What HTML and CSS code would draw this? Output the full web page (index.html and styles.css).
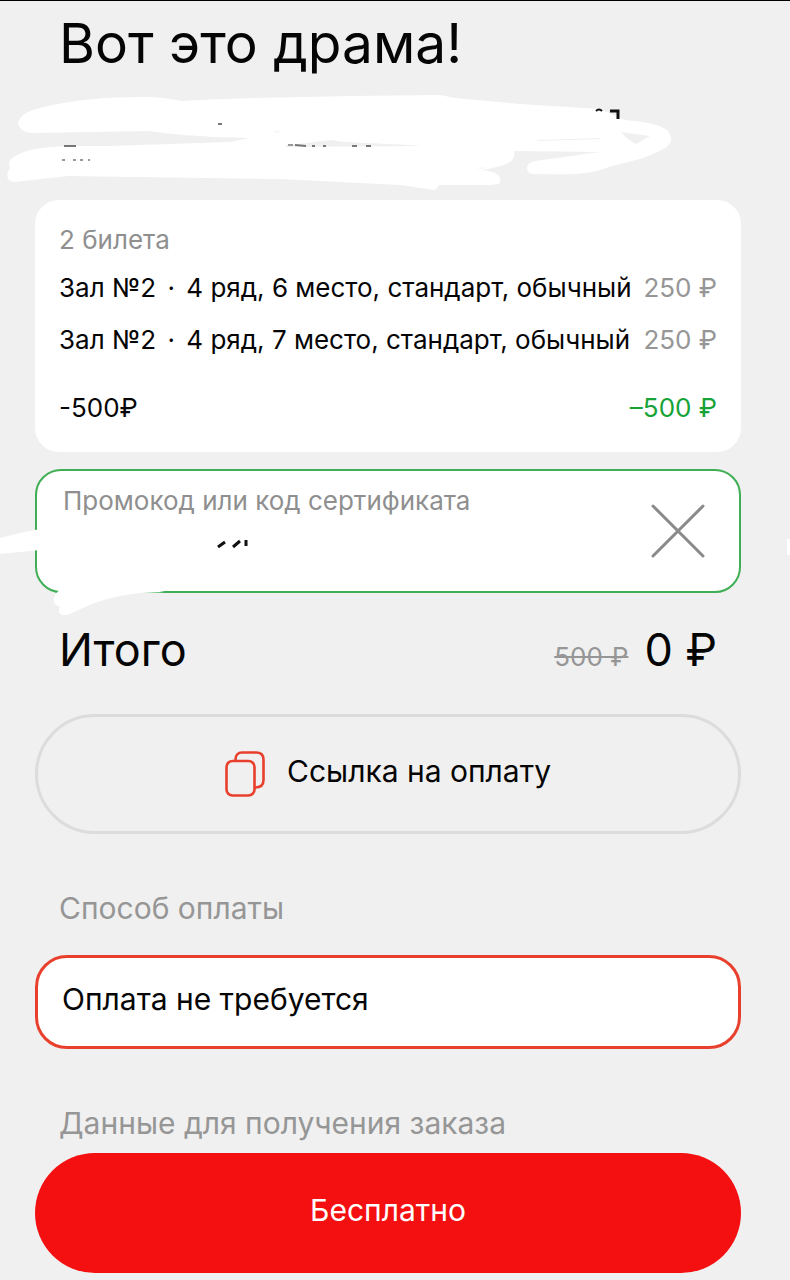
FILE: index.html
```html
<!DOCTYPE html>
<html lang="ru">

<head>
    <meta charset="UTF-8">
    <meta name="viewport" content="width=device-width, initial-scale=1.0">
    <title>Вот это драма!</title>
    <link rel="stylesheet" href="styles.css">
</head>

<body>
    <main class="order">
        <h1 class="order-title">Вот это драма!</h1>

        <!-- Закрашенные данные сеанса -->
        <svg class="session-cover" viewBox="0 0 790 100" preserveAspectRatio="xMinYMin" aria-hidden="true">
            <path fill="#fff" d="M18 32 C20 25 26 20 40 17 C70 9 105 6 145 6 C160 6 170 8 182 10 C230 7 300 6 350 5 L440 4 L455 7 L520 13 L600 18 L625 29 C645 31 660 33 668 40 C675 50 670 56 655 62 C640 70 615 73 600 79 C580 85 555 83 532 83 C525 81 525 72 535 70 L600 61 L514 60 C517 72 502 76 482 79 C497 80 503 86 499 93 L490 94 L439 94 L435 99 L400 94 L280 88 L136 86 L68 85 L14 91 C6 91 6 82 10 77 C6 69 14 64 30 59 C50 54 85 55 110 55 L230 51 L250 47 C210 46 185 45 150 40 L32 42 C24 42 20 38 18 32 Z" />
            <path fill="#f0f0f0" d="M621 41 L650 45 L636 53 C630 50 626 47 621 41 Z M286 54 C310 52 320 50 332 49 C345 52 380 52 424 55 L286 56 Z M536 49 L600 47 L600 48 L538 50 Z" />
            <path fill="#f7f7f7" d="M273 40 L280 39 L278 43 Z M474 77 L486 76 L483 78 Z" />
            <path fill="none" stroke="#111" stroke-width="3" d="M610 20 H618 V28" />
            <path fill="none" stroke="#111" stroke-width="2" d="M596 20 C598 18 600 18 602 20" />
            <path fill="none" stroke="#777" stroke-width="2" d="M64 55 H76 M295 54 L306 55 M312 55 H315 M323 55 H326 M352 55 H357 M366 55 H371 M218 33 H222" />
            <path fill="none" stroke="#999" stroke-width="2" d="M62 69 H65 M73 69 H76 M80 69 H83 M88 69 H90 M288 54 H293" />
        </svg>

        <!-- Билеты -->
        <section class="tickets">
            <h2 class="tickets-title">2 билета</h2>
            <ul class="tickets-list">
                <li class="ticket-row">
                    <span>Зал №2 <span class="dot">·</span> 4 ряд, 6 место, стандарт, обычный</span>
                    <span class="ticket-price">250 ₽</span>
                </li>
                <li class="ticket-row">
                    <span>Зал №2 <span class="dot">·</span> 4 ряд, 7 место, стандарт, обычный</span>
                    <span class="ticket-price">250 ₽</span>
                </li>
            </ul>
            <div class="ticket-row">
                <span>-500₽</span>
                <span class="discount">–500 ₽</span>
            </div>
        </section>

        <!-- Промокод -->
        <div class="promo">
            <div class="promo-field">
                <label for="promo" class="promo-label">Промокод или код сертификата</label>
                <input type="text" id="promo" name="promo" class="promo-input">
            </div>
            <button type="button" class="promo-clear" aria-label="Очистить">
                <svg width="54" height="54" viewBox="0 0 54 54" aria-hidden="true">
                    <path d="M2 2 L52 52 M52 2 L2 52" fill="none" stroke="#8a8a8a" stroke-width="3" stroke-linecap="round" />
                </svg>
            </button>
            <svg class="promo-cover" viewBox="0 0 300 160" aria-hidden="true">
                <path fill="#fff" d="M0 69 L20 64 L40 60 V81 L20 83 L0 85 Z M60 120 L148 120 L165 123 L142 124 C125 125 105 130 92 135 L67 146 C60 147 57 143 60 138 C54 136 52 131 55 126 Z" />
                <path fill="none" stroke="#111" stroke-width="3" d="M218 78 L225 73 M233 78 L240 72 M246 71 V77" />
            </svg>
            <span class="edge-mark"></span>
        </div>

        <!-- Итого -->
        <div class="total">
            <span class="total-title">Итого</span>
            <s class="total-old">500 ₽</s>
            <span class="total-price">0 ₽</span>
        </div>

        <button type="button" class="link-btn">
            <svg width="40" height="46" viewBox="0 0 40 46" aria-hidden="true">
                <g fill="none" stroke="#e8402c" stroke-width="2.6">
                    <rect x="1.5" y="10" width="28" height="34.5" rx="6" />
                    <path d="M10.5 10 V8.5 C10.5 4 13 1.5 17 1.5 H31 C36 1.5 38.5 4 38.5 8.5 V29 C38.5 34 36 36.5 30 36.5" />
                </g>
            </svg>
            <span class="btn-text">Ссылка на оплату</span>
        </button>

        <!-- Оплата -->
        <h2 class="section-title">Способ оплаты</h2>
        <button type="button" class="pay-method">Оплата не требуется</button>

        <h2 class="section-title">Данные для получения заказа</h2>
        <button type="submit" class="submit-btn">Бесплатно</button>
    </main>
</body>

</html>
```
FILE: styles.css
```css
* {
    box-sizing: border-box;
}

body {
    margin: 0;
    font-family: Inter, "Liberation Sans", sans-serif;
    font-size: 26px;
    line-height: 36px;
    color: #050505;
    background-color: #f0f0f0;
    border-top: 1px solid #000;
    overflow-x: hidden;
}

button,
input {
    font-family: inherit;
    color: inherit;
}

button {
    cursor: pointer;
}

h1,
h2,
ul {
    margin: 0;
    padding: 0;
    font-weight: 400;
}

.order {
    padding: 10px 49px 7px 35px;
}

/* Заголовок */
.order-title {
    padding-left: 24px;
    font-size: 55px;
    line-height: 64px;
}

.session-cover {
    display: block;
    width: calc(100% + 84px);
    height: 100px;
    margin: 16px 0 9px -35px;
}

/* Билеты */
.tickets {
    padding: 22px 24px 26px;
    background-color: #fff;
    border-radius: 24px;
}

.tickets-title {
    margin-bottom: 12px;
    font-size: 26px;
    color: #8f8f8f;
}

.tickets-list {
    display: flex;
    flex-direction: column;
    gap: 16px;
    margin-bottom: 32px;
    list-style: none;
}

.ticket-row {
    display: flex;
    justify-content: space-between;
    white-space: nowrap;
}

.dot {
    margin: 0 4px;
}

.ticket-price {
    color: #969696;
}

.discount {
    color: #17a338;
}

/* Промокод */
.promo {
    position: relative;
    display: flex;
    align-items: center;
    justify-content: space-between;
    height: 124px;
    margin-top: 17px;
    padding: 0 34px 0 26px;
    background-color: #fff;
    border: 2px solid #3fae55;
    border-radius: 26px;
}

.promo-field {
    display: flex;
    flex: 1;
    flex-direction: column;
}

.promo-label {
    color: #8f8f8f;
}

.promo-input {
    height: 60px;
    padding: 0;
    border: none;
    outline: none;
    background: none;
    font-size: 26px;
}

.promo-clear {
    height: 54px;
    padding: 0;
    border: none;
    background: none;
}

.promo-cover {
    position: absolute;
    top: -2px;
    left: -37px;
    width: 300px;
    height: 160px;
    pointer-events: none;
}

.edge-mark {
    position: absolute;
    top: 68px;
    right: -51px;
    width: 3px;
    height: 16px;
    background-color: #fff;
}

/* Итого */
.total {
    display: flex;
    align-items: baseline;
    gap: 16px;
    padding: 25px 24px 0;
    line-height: 64px;
}

.total-title {
    flex: 1;
    font-size: 45px;
}

.total-old {
    color: #969696;
}

.total-price {
    font-size: 45px;
}

.link-btn {
    display: flex;
    align-items: center;
    justify-content: center;
    gap: 22px;
    width: 100%;
    height: 120px;
    margin-top: 25px;
    padding: 0;
    font-size: 30px;
    background: none;
    border: 3px solid #dcdcdc;
    border-radius: 60px;
}

.btn-text {
    padding-bottom: 6px;
}

/* Оплата */
.section-title {
    margin-top: 54px;
    padding-left: 24px;
    font-size: 30px;
    line-height: 40px;
    color: #969696;
}

.pay-method {
    width: 100%;
    height: 94px;
    margin-top: 27px;
    padding: 0 24px 6px;
    font-size: 30px;
    text-align: left;
    background-color: #fff;
    border: 3px solid #e8402c;
    border-radius: 32px;
}

.submit-btn {
    width: 100%;
    height: 120px;
    margin-top: 10px;
    padding: 0 0 6px;
    font-size: 30px;
    color: #fff;
    background-color: #f40f11;
    border: none;
    border-radius: 60px;
}
```
